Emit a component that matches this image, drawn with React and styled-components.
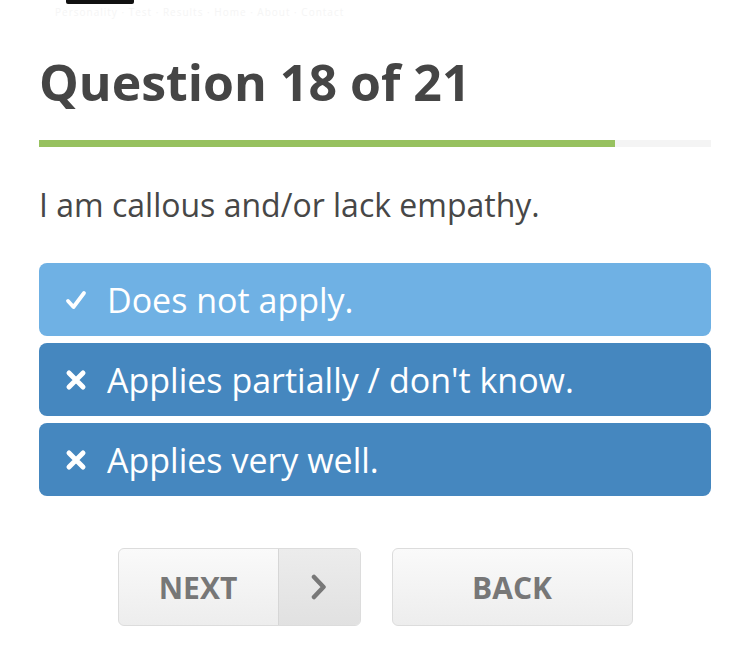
import React from "react";
import styled, { createGlobalStyle } from "styled-components";

const Global = createGlobalStyle`
  html, body { margin: 0; padding: 0; background: #fff; }
  body { font-family: "Open Sans", "Noto Sans", sans-serif; color: #444; }
`;

const Page = styled.div`
  width: 750px;
  box-sizing: border-box;
  padding: 0 39px;
`;

const TopStrip = styled.div`
  height: 22px;
  display: flex;
  flex-direction: column;
  gap: 3px;
  overflow: hidden;
`;

const TopBlock = styled.div`
  margin-left: 27px;
  width: 68px;
  height: 4px;
  background: #111;
  border-radius: 0 0 2px 2px;
`;

const TopCrumbs = styled.div`
  margin-left: 16px;
  font-size: 10px;
  line-height: 10px;
  color: #f5f5f5;
  white-space: nowrap;
  letter-spacing: 1px;
`;

const Heading = styled.h1`
  margin: 30px 0 0;
  font-size: 50px;
  line-height: 60px;
  font-weight: 700;
  color: #454545;
`;

const Track = styled.div`
  margin-top: 28px;
  height: 7px;
  background: #f4f4f4;
  display: flex;
`;

const Fill = styled.div`
  height: 100%;
  background: #97c15f;
`;

const Prompt = styled.p`
  margin: 38px 0 0;
  font-size: 32px;
  line-height: 40px;
  color: #474747;
`;

const Options = styled.div`
  margin-top: 38px;
  display: flex;
  flex-direction: column;
  gap: 7px;
`;

const Option = styled.div`
  height: 73px;
  border-radius: 8px;
  background: ${(p) => (p.$selected ? "#6fb1e4" : "#4587bf")};
  color: #fff;
  display: flex;
  align-items: center;
  padding-left: 25px;
  gap: 19px;
  font-size: 34px;
`;

const IconBox = styled.span`
  width: 24px;
  height: 24px;
  display: flex;
  align-items: center;
  justify-content: center;
`;

const Buttons = styled.div`
  margin-top: 52px;
  display: flex;
  justify-content: center;
  gap: 31px;
`;

const Btn = styled.button`
  width: ${(p) => p.$w}px;
  height: 78px;
  padding: 0;
  border: 1px solid #dcdcdc;
  border-radius: 6px;
  background: linear-gradient(#fafafa, #ededed);
  display: flex;
  align-items: stretch;
  overflow: hidden;
  font-family: "Open Sans", sans-serif;
  font-weight: 700;
  font-size: 30px;
  color: #777;
  box-sizing: border-box;
`;

const BtnLabel = styled.span`
  flex: 1;
  display: flex;
  align-items: center;
  justify-content: center;
`;

const BtnArrow = styled.span`
  width: 81px;
  border-left: 1px solid #d6d6d6;
  background: linear-gradient(#ececec, #e1e1e1);
  display: flex;
  align-items: center;
  justify-content: center;
`;

const Check = () => (
  <svg width="22" height="20" viewBox="0 0 22 20">
    <polyline points="3,11 8.5,17 19,3" fill="none" stroke="#fff" strokeWidth="3.8" strokeLinecap="round" strokeLinejoin="round" />
  </svg>
);

const Cross = () => (
  <svg width="22" height="22" viewBox="0 0 22 22">
    <path d="M4 4 L18 18 M18 4 L4 18" fill="none" stroke="#fff" strokeWidth="5" strokeLinecap="round" />
  </svg>
);

const Chevron = () => (
  <svg width="18" height="26" viewBox="0 0 18 26">
    <polyline points="4,3 13.5,13 4,23" fill="none" stroke="#787878" strokeWidth="4.5" strokeLinecap="round" strokeLinejoin="round" />
  </svg>
);

const options = [
  { text: "Does not apply.", selected: true },
  { text: "Applies partially / don't know.", selected: false },
  { text: "Applies very well.", selected: false },
];

export default function App() {
  const progress = (615 - 39) / 672;
  return (
    <Page>
      <Global />
      <TopStrip>
        <TopBlock />
        <TopCrumbs>Personality · Test · Results · Home · About · Contact</TopCrumbs>
      </TopStrip>
      <Heading>Question 18 of 21</Heading>
      <Track>
        <Fill style={{ width: `${progress * 100}%` }} />
      </Track>
      <Prompt>I am callous and/or lack empathy.</Prompt>
      <Options>
        {options.map((o) => (
          <Option key={o.text} $selected={o.selected}>
            <IconBox>{o.selected ? <Check /> : <Cross />}</IconBox>
            {o.text}
          </Option>
        ))}
      </Options>
      <Buttons>
        <Btn $w={243}>
          <BtnLabel>NEXT</BtnLabel>
          <BtnArrow>
            <Chevron />
          </BtnArrow>
        </Btn>
        <Btn $w={241}>
          <BtnLabel>BACK</BtnLabel>
        </Btn>
      </Buttons>
    </Page>
  );
}
